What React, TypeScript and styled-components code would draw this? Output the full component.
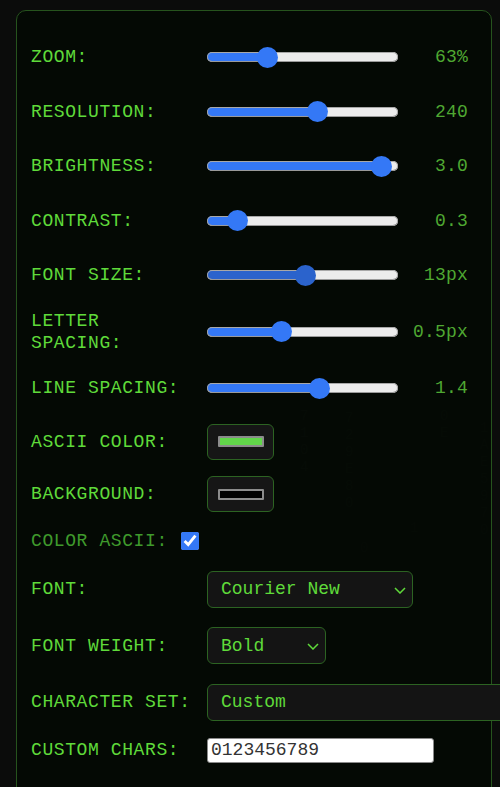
import React from "react";
import styled, { createGlobalStyle } from "styled-components";

const GlobalStyle = createGlobalStyle`
  html, body {
    margin: 0;
    padding: 0;
    background: #0b0c0b;
    overflow: hidden;
    font-family: "Liberation Mono", "Courier New", monospace;
  }
  #root { min-height: 787px; }
`;

const Page = styled.div`
  position: relative;
  min-height: 787px;
  padding: 10px 0 0 16px;
  box-sizing: border-box;
`;

const Rain = styled.div`
  position: absolute;
  inset: 0;
  z-index: 0;
  overflow: hidden;
  pointer-events: none;
`;

const RainColumn = styled.div<{ $x: number; $y: number; $o: number }>`
  position: absolute;
  left: ${(p) => p.$x}px;
  top: ${(p) => p.$y}px;
  display: flex;
  flex-direction: column;
  font-family: "Liberation Mono", monospace;
  font-size: 14px;
  line-height: 17px;
  color: rgba(120, 170, 120, ${(p) => p.$o});
`;

const Panel = styled.div`
  position: relative;
  z-index: 1;
  width: 476px;
  box-sizing: border-box;
  border: 1px solid #26531d;
  border-radius: 10px;
  background: rgba(3, 9, 3, 0.86);
  padding: 26px 23px 40px 14px;
  display: flex;
  flex-direction: column;
  gap: 14.5px;
`;

const Row = styled.div<{ $h: number }>`
  display: flex;
  align-items: center;
  height: ${(p) => p.$h}px;
`;

const Label = styled.div`
  width: 165px;
  margin-right: 11px;
  flex: none;
  color: #5fda3a;
  font-size: 18px;
  letter-spacing: 0.6px;
  line-height: 22px;
`;

const DimLabel = styled.div`
  color: #3f9a2c;
  font-size: 18px;
  letter-spacing: 0.6px;
  line-height: 22px;
  margin-right: 13px;
`;

const Value = styled.div`
  flex: 1;
  text-align: right;
  color: #4fa832;
  font-size: 18px;
  letter-spacing: 0.2px;
  line-height: 22px;
`;

const Range = styled.input<{ $fill: string }>`
  -webkit-appearance: none;
  appearance: none;
  width: 191px;
  height: 22px;
  margin: 0;
  background: transparent;
  flex: none;

  &::-webkit-slider-runnable-track {
    height: 10px;
    border-radius: 5px;
    background: linear-gradient(
      to right,
      ${(p) => p.$fill} 0,
      ${(p) => p.$fill} var(--p),
      #ececec var(--p),
      #ececec 100%
    );
    box-shadow: inset 0 -1px 0 #9a9a9a, inset 0 0 0 1px #a8a8a8;
  }

  &::-webkit-slider-thumb {
    -webkit-appearance: none;
    appearance: none;
    width: 21px;
    height: 21px;
    border-radius: 50%;
    background: ${(p) => p.$fill};
    border: none;
    margin-top: -5.5px;
  }
`;

const ColorBox = styled.div`
  width: 67px;
  height: 36px;
  box-sizing: border-box;
  border: 1px solid #2c6322;
  border-radius: 6px;
  background: #161616;
  display: flex;
  align-items: center;
  justify-content: center;
`;

const Swatch = styled.span<{ $color: string }>`
  display: block;
  width: 46px;
  height: 11px;
  box-sizing: border-box;
  border: 2px solid #8c8c8c;
  border-radius: 1px;
  background: ${(p) => p.$color};
`;

const Check = styled.input`
  width: 18px;
  height: 18px;
  margin: 0;
  accent-color: #3478f6;
`;

const SelectWrap = styled.div<{ $w: number }>`
  position: relative;
  width: ${(p) => p.$w}px;
  height: 37px;
  flex: none;
`;

const Select = styled.select`
  -webkit-appearance: none;
  appearance: none;
  width: 100%;
  height: 100%;
  box-sizing: border-box;
  border: 1px solid #2c6322;
  border-radius: 6px;
  background: #141414;
  color: #5fda3a;
  font-family: "Liberation Mono", "Courier New", monospace;
  font-size: 18px;
  padding: 0 0 0 13px;
  outline: none;
`;

const Chevron = styled.svg`
  position: absolute;
  right: 7px;
  top: 16px;
  pointer-events: none;
`;

const TextInput = styled.input`
  width: 227px;
  height: 25px;
  box-sizing: border-box;
  border: 1px solid #8a8a8a;
  border-radius: 3px;
  background: #ffffff;
  color: #333333;
  font-family: "Liberation Mono", "Courier New", monospace;
  font-size: 18px;
  padding: 0 3px;
  margin: 0;
  outline: none;
`;

type SliderDef = {
  label: string;
  min: number;
  max: number;
  value: number;
  step: number;
  display: string;
  dark?: boolean;
  h?: number;
};

const sliders: SliderDef[] = [
  { label: "ZOOM:", min: 10, max: 190, value: 63, step: 1, display: "63%" },
  { label: "RESOLUTION:", min: 40, max: 380, value: 240, step: 10, display: "240" },
  { label: "BRIGHTNESS:", min: 0.1, max: 3.1, value: 3.0, step: 0.1, display: "3.0" },
  { label: "CONTRAST:", min: 0.1, max: 1.8, value: 0.3, step: 0.1, display: "0.3" },
  { label: "FONT SIZE:", min: 6, max: 19.5, value: 13, step: 1, display: "13px", dark: true },
  { label: "LETTER SPACING:", min: -1, max: 3, value: 0.5, step: 0.1, display: "0.5px", h: 44 },
  { label: "LINE SPACING:", min: 0.5, max: 2, value: 1.4, step: 0.1, display: "1.4" },
];

function Slider({ d }: { d: SliderDef }) {
  const frac = (d.value - d.min) / (d.max - d.min);
  const px = 10.5 + frac * 170;
  return (
    <Row $h={d.h ?? 40}>
      <Label>{d.label}</Label>
      <Range
        type="range"
        min={d.min}
        max={d.max}
        step={d.step}
        defaultValue={d.value}
        $fill={d.dark ? "#2b63cc" : "#3478f6"}
        style={{ ["--p" as any]: `${px}px` }}
      />
      <Value>{d.display}</Value>
    </Row>
  );
}

function Dropdown({ w, options, value }: { w: number; options: string[]; value: string }) {
  return (
    <SelectWrap $w={w}>
      <Select defaultValue={value}>
        {options.map((o) => (
          <option key={o}>{o}</option>
        ))}
      </Select>
      <Chevron width="12" height="7" viewBox="0 0 12 7">
        <path d="M1 1 L6 6 L11 1" fill="none" stroke="#5fda3a" strokeWidth="1.5" />
      </Chevron>
    </SelectWrap>
  );
}

// faint background "rain" columns, placed in the empty areas of the panel
const rain: { x: number; y: number; o: number; text: string }[] = [
  { x: 300, y: 408, o: 0.1, text: "7104" },
  { x: 345, y: 410, o: 0.08, text: "729E80" },
  { x: 440, y: 408, o: 0.07, text: "0E" },
  { x: 480, y: 420, o: 0.06, text: "1AE5970" },
  { x: 410, y: 520, o: 0.06, text: "1" },
  { x: 360, y: 540, o: 0.05, text: "0" },
];

export default function App() {
  return (
    <>
      <GlobalStyle />
      <Page>
        <Rain>
          {rain.map((c, i) => (
            <RainColumn key={i} $x={c.x} $y={c.y} $o={c.o}>
              {c.text.split("").map((t, j) => (
                <span key={j}>{t}</span>
              ))}
            </RainColumn>
          ))}
        </Rain>
        <Panel>
          {sliders.map((d) => (
            <Slider key={d.label} d={d} />
          ))}
          <Row $h={38}>
            <Label>ASCII COLOR:</Label>
            <ColorBox>
              <Swatch $color="#62d64a" />
            </ColorBox>
          </Row>
          <Row $h={38}>
            <Label>BACKGROUND:</Label>
            <ColorBox>
              <Swatch $color="#000000" />
            </ColorBox>
          </Row>
          <Row $h={26}>
            <DimLabel>COLOR ASCII:</DimLabel>
            <Check type="checkbox" defaultChecked />
          </Row>
          <Row $h={42}>
            <Label>FONT:</Label>
            <Dropdown w={206} value="Courier New" options={["Courier New", "Monaco", "Consolas", "Menlo"]} />
          </Row>
          <Row $h={42}>
            <Label>FONT WEIGHT:</Label>
            <Dropdown w={119} value="Bold" options={["Normal", "Bold", "Lighter"]} />
          </Row>
          <Row $h={42}>
            <Label>CHARACTER SET:</Label>
            <SelectWrap $w={310}>
              <Select defaultValue="Custom">
                <option>Standard</option>
                <option>Blocks</option>
                <option>Custom</option>
              </Select>
            </SelectWrap>
          </Row>
          <Row $h={25}>
            <Label>CUSTOM CHARS:</Label>
            <TextInput type="text" defaultValue="0123456789" />
          </Row>
        </Panel>
      </Page>
    </>
  );
}
